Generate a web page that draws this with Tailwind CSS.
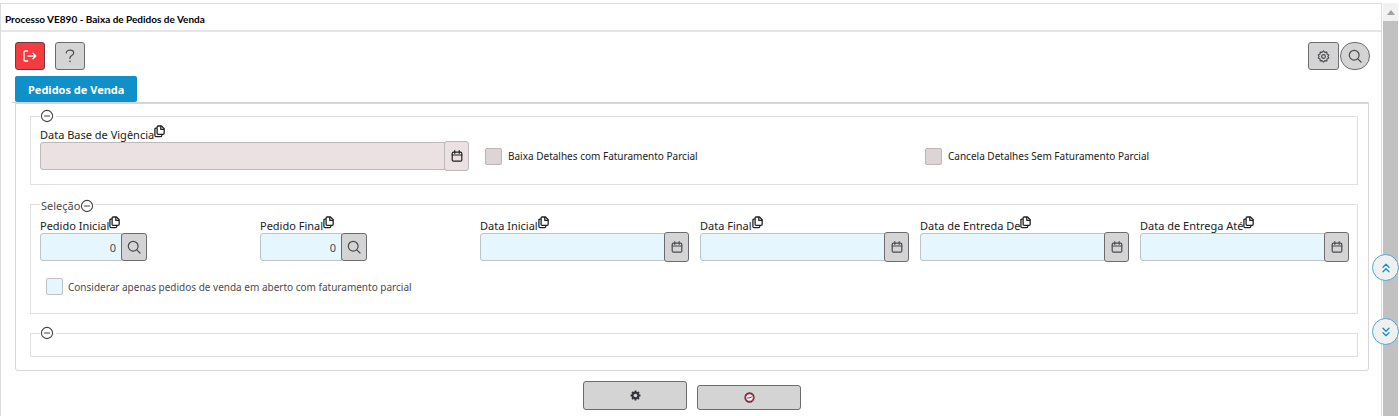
<!DOCTYPE html>
<html lang="pt-BR">
<head>
<meta charset="utf-8">
<meta name="viewport" content="width=device-width, initial-scale=1">
<title>Processo VE890 - Baixa de Pedidos de Venda</title>
<script src="https://cdn.jsdelivr.net/npm/@tailwindcss/browser@4"></script>
</head>
<body class="bg-white font-['Noto_Sans','Open_Sans',sans-serif] text-[11px] text-[#212121]">
<svg class="hidden" aria-hidden="true">
  <symbol id="search" viewBox="0 0 14 14"><g fill="none" stroke="currentColor" stroke-width="1.2" stroke-linecap="round"><circle cx="6.2" cy="6.2" r="4.9"/><path d="M9.8 9.8l3.2 3.2"/></g></symbol>
  <symbol id="calendar" viewBox="0 0 12 12"><g fill="none" stroke="currentColor" stroke-width="1.2" stroke-linecap="round" stroke-linejoin="round"><rect x="1.2" y="2.2" width="9.6" height="9" rx="1.2"/><path d="M1.2 5h9.6M3.8 .7v2.6M8.2 .7v2.6"/></g></symbol>
  <symbol id="copy" viewBox="0 0 12 14"><g fill="none" stroke="currentColor" stroke-width="1.4" stroke-linejoin="round"><path d="M4.600 1h3.600l2.900 3v5c0 .8-.4 1.200-1.200 1.200H4.600c-.8 0-1.200-.4-1.200-1.200V2.200C3.400 1.400 3.800 1 4.600 1z"/><path d="M7.400 1v3.600h3.600"/><path d="M3.200 3.200H2.300C1.500 3.200 1 3.600 1 4.400v7c0 .8.400 1.300 1.300 1.300h4.900c.8 0 1.300-.5 1.300-1.300v-1"/></g></symbol>
  <symbol id="minus" viewBox="0 0 14 14"><g fill="none" stroke="currentColor" stroke-width="1.100" stroke-linecap="round"><circle cx="7" cy="7" r="5.600"/><path d="M4.400 7h5.200"/></g></symbol>
</svg>

<div class="flex min-h-screen pt-[3px]">
  <main class="min-w-0 flex-1 border-x border-t border-[#dcdcdc]">
    <header class="flex h-7 items-center border-b-2 border-[#e6e6e6] px-1">
      <h1 class="pt-1 font-['Lato',sans-serif] text-[10px] leading-4 font-bold text-black">Processo VE890 - Baixa de Pedidos de Venda</h1>
    </header>

    <div class="pt-[10px] pr-3 pl-[14px]">
      <div class="-mr-px flex justify-between">
        <div class="flex gap-[10px]">
          <button type="button" aria-label="Sair" class="flex h-7 w-[30px] items-center justify-center rounded-[3px] border border-[#6b3a3d] bg-[#f43b3f] text-white">
            <svg class="h-3 w-[14px]" viewBox="0 0 14 12" fill="none" stroke="currentColor" stroke-width="1.300" stroke-linecap="round" stroke-linejoin="round"><path d="M4.600 1H2.200C1.500 1 1 1.400 1 2.100v7.800c0 .7.500 1.100 1.200 1.100h2.400M5 6h7.800M10 3.200L12.800 6 10 8.800"/></svg>
          </button>
          <button type="button" aria-label="Ajuda" class="flex h-7 w-[30px] items-center justify-center rounded-[3px] border border-[#6c6c70] bg-[#d4d4d4] text-[#4b4b50]">
            <svg class="h-[14px] w-[10px]" viewBox="0 0 10 14" fill="none" stroke="currentColor" stroke-width="1.200" stroke-linecap="round"><path d="M1.300 4C1.300 2.200 2.900 1.200 5 1.200S8.700 2.300 8.700 4C8.700 6.400 5 6.400 5 8.600v.8"/><path d="M5 12.300v.2" stroke-width="1.500"/></svg>
          </button>
        </div>
        <div class="flex gap-px">
          <button type="button" aria-label="Configurações" class="flex h-7 w-[31px] items-center justify-center rounded-[3px] border border-[#6c6c70] bg-[#d4d4d4] text-[#4b4b50]">
            <svg class="size-[13px]" viewBox="0 0 14 14" fill="none" stroke="currentColor" stroke-width="1.200" stroke-linejoin="round"><path d="M7 1l1.500 1.500 2.100-.2.100 2.100 2 .9L11.700 7l1 1.700-2 .9-.1 2.100-2.100-.2L7 13l-1.500-1.500-2.100.2-.1-2.100-2-.9 1-1.700-1-1.700 2-.9.100-2.100 2.100.2z"/><circle cx="7" cy="7" r="2"/></svg>
          </button>
          <button type="button" aria-label="Pesquisar" class="flex h-7 w-[30px] items-center justify-center rounded-full border border-[#6c6c70] bg-[#d4d4d4] text-[#4b4b50]"><svg class="size-[14px]"><use href="#search"/></svg></button>
        </div>
      </div>

      <div role="tablist" class="mt-[6px] -ml-[3px] flex border-b border-[#d2d2d2] pl-[3px]">
        <button type="button" role="tab" aria-selected="true" class="h-[26px] rounded-[2px] bg-[#1090c8] px-[13px] pt-px text-[11px] leading-[26px] font-bold text-white">Pedidos de Venda</button>
      </div>

      <section class="flex flex-col gap-3 rounded-b-[3px] border border-[#d6d6d6] pt-[5px] pr-[10px] pb-[13px] pl-[14px]">
        <fieldset class="border border-[#e0e0e0] pr-2 pb-[14px] pl-[9px]">
          <legend class="flex h-[14px] items-center pr-[2px]"><button type="button" aria-label="Recolher" class="text-[#444]"><svg class="size-[14px]"><use href="#minus"/></svg></button></legend>
          <div class="grid grid-cols-6 gap-[11px] pt-[3px]">
            <div class="col-span-2">
              <div class="flex h-4"><label for="base" class="leading-[18px]">Data Base de Vigência</label><svg class="-mt-px h-[13px] w-[11px]"><use href="#copy"/></svg></div>
              <div class="flex h-7 items-center">
                <input id="base" disabled class="h-7 min-w-0 flex-1 rounded-l-[3px] border border-[#bdb9ba] bg-[#ebe1e3] px-2">
                <button type="button" aria-label="Abrir calendário" class="-my-px -ml-px flex h-[30px] w-[25px] items-center justify-center rounded-[3px] border border-[#bdb9ba] bg-[#ebe1e3]"><svg class="size-3"><use href="#calendar"/></svg></button>
              </div>
            </div>
            <div class="col-span-2 flex items-center pt-4 pl-[5px]"><input id="baixa" type="checkbox" class="mr-[6px] size-[17px] appearance-none rounded-[2px] border border-[#bcb6b7] bg-[#ddd4d6] checked:bg-[#1090c8]"><label for="baixa" class="text-[10px] leading-4">Baixa Detalhes com Faturamento Parcial</label></div>
            <div class="col-span-2 flex items-center pt-4 pl-[5px]"><input id="cancela" type="checkbox" class="mr-[6px] size-[17px] appearance-none rounded-[2px] border border-[#bcb6b7] bg-[#ddd4d6] checked:bg-[#1090c8]"><label for="cancela" class="text-[10px] leading-4">Cancela Detalhes Sem Faturamento Parcial</label></div>
          </div>
        </fieldset>

        <fieldset class="border border-[#e0e0e0] pr-2 pb-[18px] pl-[9px]">
          <legend class="flex h-[14px] items-center px-px pt-1 text-[#4b4b50]"><span class="leading-[14px]">Seleção</span><button type="button" aria-label="Recolher Seleção" class="text-[#444]"><svg class="size-[14px]"><use href="#minus"/></svg></button></legend>
          <div class="grid grid-cols-6 gap-[11px] pt-[6px]">
            <div>
              <div class="flex h-4"><label for="pini" class="leading-[18px]">Pedido Inicial</label><svg class="-mt-px h-[13px] w-[11px]"><use href="#copy"/></svg></div>
              <div class="flex h-7"><input id="pini" value="0" class="h-7 w-[82px] rounded-l-[3px] border border-[#bcc4c8] bg-[#e5f6fe] px-[5px] text-right text-[#4b4b50]"><button type="button" aria-label="Pesquisar pedido inicial" class="-ml-px flex h-7 w-[26px] items-center justify-center rounded-[3px] border border-[#6c6c70] bg-[#d4d4d4] text-[#4b4b50]"><svg class="size-[14px]"><use href="#search"/></svg></button></div>
            </div>
            <div>
              <div class="flex h-4"><label for="pfim" class="leading-[18px]">Pedido Final</label><svg class="-mt-px h-[13px] w-[11px]"><use href="#copy"/></svg></div>
              <div class="flex h-7"><input id="pfim" value="0" class="h-7 w-[82px] rounded-l-[3px] border border-[#bcc4c8] bg-[#e5f6fe] px-[5px] text-right text-[#4b4b50]"><button type="button" aria-label="Pesquisar pedido final" class="-ml-px flex h-7 w-[26px] items-center justify-center rounded-[3px] border border-[#6c6c70] bg-[#d4d4d4] text-[#4b4b50]"><svg class="size-[14px]"><use href="#search"/></svg></button></div>
            </div>
            <div>
              <div class="flex h-4"><label for="dini" class="leading-[18px]">Data Inicial</label><svg class="-mt-px h-[13px] w-[11px]"><use href="#copy"/></svg></div>
              <div class="flex h-7 items-center"><input id="dini" class="h-7 min-w-0 flex-1 rounded-l-[3px] border border-[#bcc4c8] bg-[#e5f6fe] px-2"><button type="button" aria-label="Abrir calendário" class="-my-px -ml-px flex h-[30px] w-[25px] items-center justify-center rounded-[3px] border border-[#6c6c70] bg-[#d4d4d4] text-[#4b4b50]"><svg class="size-3"><use href="#calendar"/></svg></button></div>
            </div>
            <div>
              <div class="flex h-4"><label for="dfim" class="leading-[18px]">Data Final</label><svg class="-mt-px h-[13px] w-[11px]"><use href="#copy"/></svg></div>
              <div class="flex h-7 items-center"><input id="dfim" class="h-7 min-w-0 flex-1 rounded-l-[3px] border border-[#bcc4c8] bg-[#e5f6fe] px-2"><button type="button" aria-label="Abrir calendário" class="-my-px -ml-px flex h-[30px] w-[25px] items-center justify-center rounded-[3px] border border-[#6c6c70] bg-[#d4d4d4] text-[#4b4b50]"><svg class="size-3"><use href="#calendar"/></svg></button></div>
            </div>
            <div>
              <div class="flex h-4"><label for="ede" class="leading-[18px]">Data de Entreda De</label><svg class="-mt-px h-[13px] w-[11px]"><use href="#copy"/></svg></div>
              <div class="flex h-7 items-center"><input id="ede" class="h-7 min-w-0 flex-1 rounded-l-[3px] border border-[#bcc4c8] bg-[#e5f6fe] px-2"><button type="button" aria-label="Abrir calendário" class="-my-px -ml-px flex h-[30px] w-[25px] items-center justify-center rounded-[3px] border border-[#6c6c70] bg-[#d4d4d4] text-[#4b4b50]"><svg class="size-3"><use href="#calendar"/></svg></button></div>
            </div>
            <div>
              <div class="flex h-4"><label for="eate" class="leading-[18px]">Data de Entrega Até</label><svg class="-mt-px h-[13px] w-[11px]"><use href="#copy"/></svg></div>
              <div class="flex h-7 items-center"><input id="eate" class="h-7 min-w-0 flex-1 rounded-l-[3px] border border-[#bcc4c8] bg-[#e5f6fe] px-2"><button type="button" aria-label="Abrir calendário" class="-my-px -ml-px flex h-[30px] w-[25px] items-center justify-center rounded-[3px] border border-[#6c6c70] bg-[#d4d4d4] text-[#4b4b50]"><svg class="size-3"><use href="#calendar"/></svg></button></div>
            </div>
          </div>
          <div class="mt-[17px] flex h-[17px] items-center pl-[6px]"><input id="aberto" type="checkbox" class="mr-[5px] size-[17px] appearance-none rounded-[2px] border border-[#bcc4c8] bg-[#e5f6fe] checked:bg-[#1090c8]"><label for="aberto" class="text-[10px] leading-4 text-[#4b4b50]">Considerar apenas pedidos de venda em aberto com faturamento parcial</label></div>
        </fieldset>

        <fieldset class="border border-[#e0e0e0] pr-2 pb-4 pl-[9px]">
          <legend class="flex h-[14px] items-center pr-[2px]"><button type="button" aria-label="Recolher" class="text-[#444]"><svg class="size-[14px]"><use href="#minus"/></svg></button></legend>
        </fieldset>
      </section>

      <div class="mt-[10px] flex items-end justify-center gap-[10px]">
        <button type="button" aria-label="Processar" class="flex h-[29px] w-[104px] items-center justify-center rounded-[3px] border border-[#6c6c70] bg-[#d4d4d4] text-[#34343c]">
          <svg class="size-[11px]" viewBox="0 0 12 12"><circle cx="6" cy="6" r="3.200" fill="none" stroke="currentColor" stroke-width="2.200"/><path d="M6 .6v10.800M.6 6h10.800M2.200 2.200l7.600 7.600M9.800 2.200L2.200 9.800" stroke="currentColor" stroke-width="2" fill="none"/><circle cx="6" cy="6" r="2" fill="#d4d4d4"/></svg>
        </button>
        <button type="button" aria-label="Agendar" class="flex h-[25px] w-[104px] items-center justify-center rounded-[3px] border border-[#6c6c70] bg-[#d4d4d4]">
          <svg class="size-[11px]" viewBox="0 0 12 12" fill="none"><circle cx="6" cy="6" r="4.900" fill="#f2f2f8" stroke="#4a3038" stroke-width="1.400"/><circle cx="6" cy="6" r="4.200" stroke="#d3142a" stroke-width="1.100"/><path d="M3.400 6.600L6 6.400l2.600-1.200" stroke="#3c3c58" stroke-width="1"/></svg>
        </button>
      </div>
    </div>
  </main>

  <div class="flex w-[17px] flex-col px-px" aria-hidden="true">
    <div class="flex h-[18px] items-center justify-center bg-[#f1f1f1]"><svg class="h-[5px] w-2" viewBox="0 0 8 5"><path d="M0 5l4-5 4 5z" fill="#a0a0a0"/></svg></div>
    <div class="flex-1 bg-[#c1c1c1]"></div>
  </div>
</div>

<nav class="fixed top-[254px] right-0 flex flex-col gap-[37px]" aria-label="Rolagem">
  <button type="button" aria-label="Ir para o topo" class="flex size-[27px] items-center justify-center rounded-full border border-[#4aa8d4] bg-[#f0f0f0] text-[#1090c8]"><svg class="h-[10px] w-2" viewBox="0 0 8 10" fill="none" stroke="currentColor" stroke-width="1.300" stroke-linecap="round" stroke-linejoin="round"><path d="M1 4.200l3-3 3 3M1 8.800l3-3 3 3"/></svg></button>
  <button type="button" aria-label="Ir para o fim" class="flex size-[27px] items-center justify-center rounded-full border border-[#4aa8d4] bg-[#f0f0f0] text-[#1090c8]"><svg class="h-[10px] w-2" viewBox="0 0 8 10" fill="none" stroke="currentColor" stroke-width="1.300" stroke-linecap="round" stroke-linejoin="round"><path d="M1 1.200l3 3 3-3M1 5.800l3 3 3-3"/></svg></button>
</nav>
</body>
</html>
